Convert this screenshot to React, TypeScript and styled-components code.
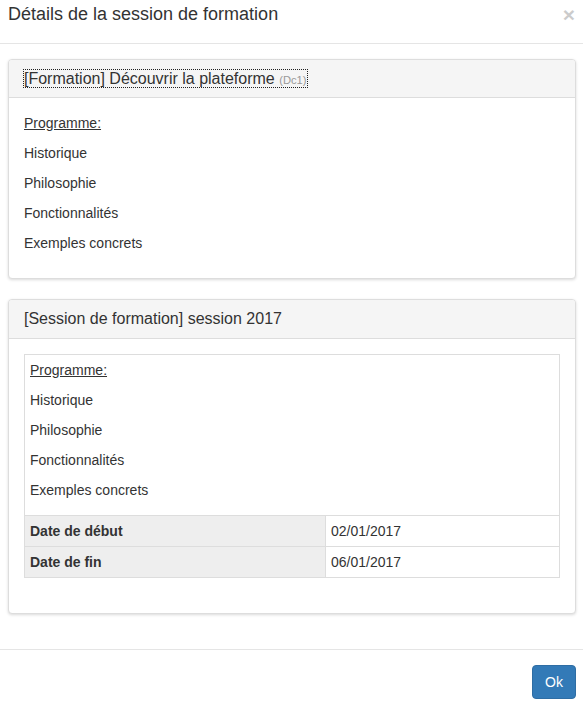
import React from 'react';
import styled, { createGlobalStyle } from 'styled-components';

const GlobalStyle = createGlobalStyle`
  body {
    margin: 0;
    background: #fff;
    font-family: "Liberation Sans", Arial, sans-serif;
    font-size: 14px;
    line-height: 20px;
    color: #333;
  }
  * { box-sizing: border-box; }
`;

const Modal = styled.div`
  width: 583px;
  background: #fff;
`;

const Header = styled.div`
  display: flex;
  align-items: flex-start;
  justify-content: space-between;
  padding: 2px 8px 15px 8px;
  border-bottom: 1px solid #e5e5e5;
`;

const ModalTitle = styled.h4`
  margin: 0;
  font-size: 18px;
  font-weight: 500;
  line-height: 1.42857;
  color: #333;
`;

const Close = styled.button`
  border: 0;
  background: none;
  padding: 0;
  margin-top: 2px;
  font-family: "Liberation Sans", Arial, sans-serif;
  font-size: 21px;
  font-weight: bold;
  line-height: 1;
  color: #000;
  opacity: 0.2;
  text-shadow: 0 1px 0 #fff;
  cursor: pointer;
`;

const Body = styled.div`
  padding: 15px 7px 15px 8px;
`;

const Panel = styled.div`
  margin-bottom: 20px;
  background: #fff;
  border: 1px solid #ddd;
  border-radius: 4px;
  box-shadow: 0 1px 3px rgba(0, 0, 0, 0.15);
`;

const PanelHeading = styled.div`
  padding: 10px 15px;
  background: #f5f5f5;
  border-bottom: 1px solid #ddd;
  border-top-left-radius: 3px;
  border-top-right-radius: 3px;
`;

const PanelTitle = styled.h3`
  margin: 0;
  height: 17.6px;
  font-size: 16px;
  font-weight: 500;
  line-height: 17.6px;
  color: #333;
`;

const FocusLink = styled.span<{ $focused?: boolean }>`
  outline: ${(p) => (p.$focused ? '1px dotted #222' : 'none')};
`;

const Code = styled.small`
  font-size: 11.2px;
  line-height: 1;
  color: #999;
`;

const PanelBody = styled.div`
  padding: 15px;
`;

const Para = styled.p<{ $underline?: boolean }>`
  margin: 0 0 10px;
  line-height: 20px;
  text-decoration: ${(p) => (p.$underline ? 'underline' : 'none')};
`;

const Table = styled.table`
  width: 100%;
  margin-bottom: 20px;
  border-collapse: collapse;
  border: 1px solid #ddd;
`;

const Th = styled.th`
  width: 301px;
  padding: 5px;
  text-align: left;
  font-weight: bold;
  line-height: 20px;
  background: #eee;
  border: 1px solid #ddd;
`;

const Td = styled.td`
  padding: 5px;
  line-height: 20px;
  border: 1px solid #ddd;
  vertical-align: top;
`;

const Footer = styled.div`
  display: flex;
  justify-content: flex-end;
  padding: 15px 7px 0 8px;
  border-top: 1px solid #e5e5e5;
`;

const Button = styled.button`
  padding: 6px 12px;
  font-family: "Liberation Sans", Arial, sans-serif;
  font-size: 14px;
  line-height: 20px;
  color: #fff;
  background: #337ab7;
  border: 1px solid #2e6da4;
  border-radius: 4px;
  cursor: pointer;
`;

const programme = ['Historique', 'Philosophie', 'Fonctionnalités', 'Exemples concrets'];

function Programme() {
  return (
    <>
      <Para $underline>Programme:</Para>
      {programme.map((item) => (
        <Para key={item}>{item}</Para>
      ))}
    </>
  );
}

export default function App() {
  return (
    <>
      <GlobalStyle />
      <Modal>
        <Header>
          <ModalTitle>Détails de la session de formation</ModalTitle>
          <Close aria-label='Fermer'>×</Close>
        </Header>
        <Body>
          <Panel>
            <PanelHeading>
              <PanelTitle>
                <FocusLink $focused>
                  [Formation] Découvrir la plateforme <Code>(Dc1)</Code>
                </FocusLink>
              </PanelTitle>
            </PanelHeading>
            <PanelBody>
              <Programme />
            </PanelBody>
          </Panel>
          <Panel>
            <PanelHeading>
              <PanelTitle>[Session de formation] session 2017</PanelTitle>
            </PanelHeading>
            <PanelBody>
              <Table>
                <tbody>
                  <tr>
                    <Td colSpan={2}>
                      <Programme />
                    </Td>
                  </tr>
                  <tr>
                    <Th>Date de début</Th>
                    <Td>02/01/2017</Td>
                  </tr>
                  <tr>
                    <Th>Date de fin</Th>
                    <Td>06/01/2017</Td>
                  </tr>
                </tbody>
              </Table>
            </PanelBody>
          </Panel>
        </Body>
        <Footer>
          <Button>Ok</Button>
        </Footer>
      </Modal>
    </>
  );
}
